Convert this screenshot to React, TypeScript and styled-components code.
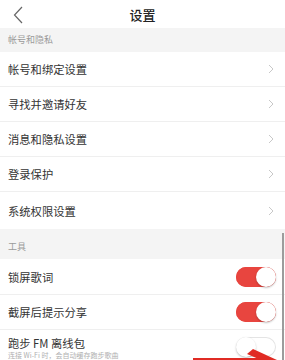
import styled, { createGlobalStyle } from 'styled-components'

const GlobalStyle = createGlobalStyle`
  html, body {
    margin: 0;
    padding: 0;
    background: #ffffff;
  }
  body {
    font-family: 'Noto Sans CJK SC', 'Noto Sans', sans-serif;
    color: #333333;
  }
`

const Page = styled.div`
  position: relative;
  width: 285px;
  height: 360px;
  overflow: hidden;
  background: #ffffff;
`

const Header = styled.div`
  display: grid;
  grid-template-columns: 40px 1fr 40px;
  align-items: center;
  height: 28px;
`

const BackButton = styled.div`
  display: flex;
  align-items: center;
  padding: 2px 0 0 13px;
  color: #555555;
`

const Title = styled.div`
  text-align: center;
  font-size: 13px;
  font-weight: 500;
  color: #222222;
`

const SectionLabel = styled.div<{ $height: number }>`
  display: flex;
  align-items: flex-end;
  height: ${({ $height }) => $height}px;
  padding: 0 0 6px 8px;
  box-sizing: border-box;
  background: #f4f4f4;
  font-size: 9px;
  color: #9a9a9a;
`

const Row = styled.div<{ $height?: number }>`
  display: flex;
  align-items: center;
  justify-content: space-between;
  height: ${({ $height }) => $height ?? 35}px;
  padding: 0 9px 0 8px;
  box-sizing: border-box;
  border-bottom: 1px solid #efefef;

  &:last-child {
    border-bottom: none;
  }
`

const Label = styled.div`
  display: flex;
  flex-direction: column;
  font-size: 11.3px;
  color: #333333;
  line-height: 14px;
`

const SubLabel = styled.span`
  display: block;
  margin-top: 1px;
  font-size: 7px;
  line-height: 8px;
  color: #b0b0b0;
`

const Chevron = styled.svg`
  width: 6px;
  height: 10px;
  margin-right: 2px;
`

const Toggle = styled.div<{ $on: boolean }>`
  position: relative;
  width: 40px;
  height: 20px;
  border-radius: 10px;
  background: ${({ $on }) => ($on ? '#e8453f' : '#ffffff')};
  box-shadow: inset 0 0 0 1px ${({ $on }) => ($on ? '#e8453f' : '#e4e4e4')};

  &::after {
    content: '';
    position: absolute;
    top: 0;
    left: ${({ $on }) => ($on ? '20px' : '0')};
    width: 20px;
    height: 20px;
    border-radius: 50%;
    background: #ffffff;
    box-shadow: 0 1px 2px rgba(0, 0, 0, 0.25);
  }
`

const ScrollBar = styled.div`
  position: absolute;
  right: 1px;
  top: 233px;
  width: 2px;
  height: 130px;
  background: #9c9c9c;
`

const Arrow = styled.svg`
  position: absolute;
  left: 185px;
  top: 340px;
  width: 100px;
  height: 20px;
`

const accountItems = ['帐号和绑定设置', '寻找并邀请好友', '消息和隐私设置', '登录保护', '系统权限设置']

const ChevronIcon = () => (
  <Chevron viewBox="0 0 6 10">
    <path d="M1 1 L5 5 L1 9" fill="none" stroke="#c8c8c8" strokeWidth="1" />
  </Chevron>
)

export default function App() {
  return (
    <Page>
      <GlobalStyle />
      <Header>
        <BackButton>
          <svg width="10" height="18" viewBox="0 0 10 18">
            <path d="M9 1 L1.5 9 L9 17" fill="none" stroke="#666" strokeWidth="1.2" />
          </svg>
        </BackButton>
        <Title>设置</Title>
        <div />
      </Header>

      <SectionLabel $height={24}>帐号和隐私</SectionLabel>
      <div>
        {accountItems.map((item, i) => (
          <Row key={item} $height={i === accountItems.length - 1 ? 37 : 35}>
            <Label>{item}</Label>
            <ChevronIcon />
          </Row>
        ))}
      </div>

      <SectionLabel $height={30}>工具</SectionLabel>
      <div>
        <Row $height={36}>
          <Label>锁屏歌词</Label>
          <Toggle $on />
        </Row>
        <Row>
          <Label>截屏后提示分享</Label>
          <Toggle $on />
        </Row>
        <Row $height={34}>
          <Label>
            跑步 FM 离线包
            <SubLabel>连接 Wi-Fi 时，会自动缓存跑步歌曲</SubLabel>
          </Label>
          <Toggle $on={false} />
        </Row>
      </div>

      <ScrollBar />
      <Arrow viewBox="0 0 100 20">
        <polygon points="8,18 78,18 80,20 8,20" fill="#e02b24" />
        <polygon points="68,9 92,20 76,20 62,14" fill="#e02b24" />
      </Arrow>
    </Page>
  )
}
